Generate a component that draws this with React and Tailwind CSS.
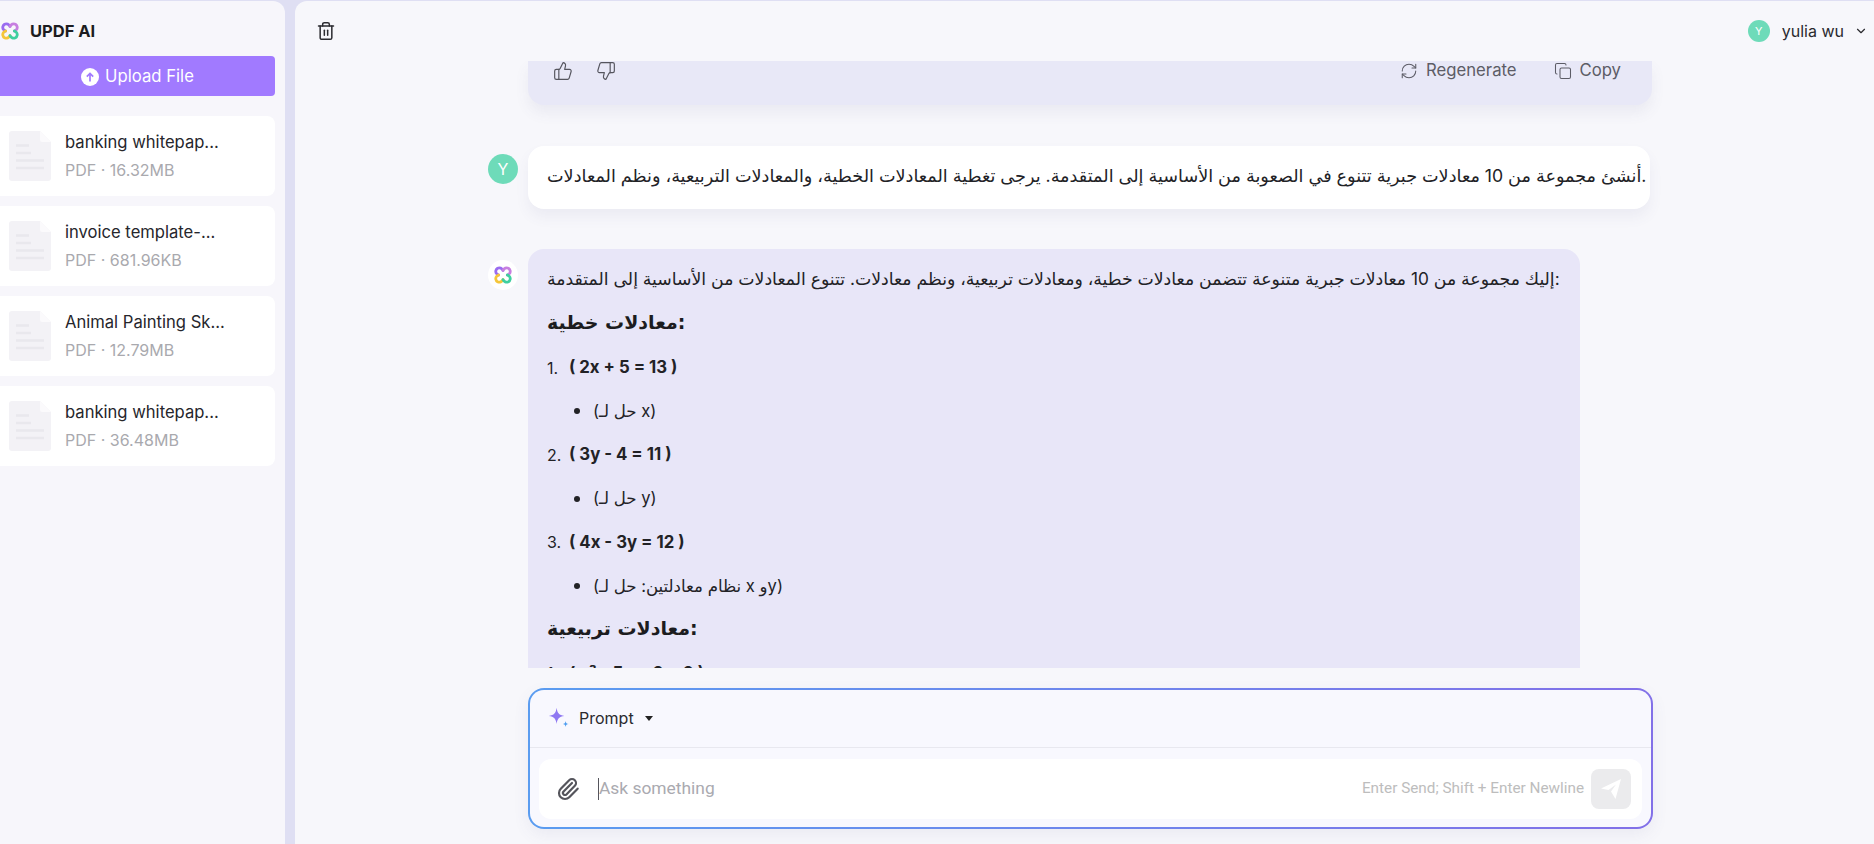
import React from 'react';
import { ChevronDown, Copy, RefreshCw, ThumbsDown, ThumbsUp, Trash2, Paperclip } from 'lucide-react';

const files = [
  { name: 'banking whitepap...', meta: 'PDF · 16.32MB' },
  { name: 'invoice template-...', meta: 'PDF · 681.96KB' },
  { name: 'Animal Painting Sk...', meta: 'PDF · 12.79MB' },
  { name: 'banking whitepap...', meta: 'PDF · 36.48MB' },
];

const Logo = ({ className }) => (
  <svg viewBox="0 0 18 18" fill="none" strokeWidth="2.8" strokeLinecap="round" className={className}>
    <path d="M9 4.4C8 2.2 5.6 1.2 3.6 2.2 1.6 3.4 1.2 6 2.6 7.6 3.2 8.3 3.8 8.7 4.6 9" stroke="#9a6cf0" />
    <path d="M9 4.4C10 2.2 12.4 1.2 14.4 2.2 16.4 3.4 16.8 6 15.4 7.6 14.8 8.3 14.2 8.7 13.4 9" stroke="#c77fe0" />
    <path d="M4.6 9C3.8 9.3 3.2 9.7 2.6 10.4 1.2 12 1.6 14.6 3.6 15.8 5.6 16.8 8 15.8 9 13.6" stroke="#f5c63a" />
    <path d="M13.4 9C14.2 9.3 14.8 9.7 15.4 10.4 16.8 12 16.4 14.6 14.4 15.8 12.4 16.8 10 15.8 9 13.6" stroke="#3fcf9f" />
  </svg>
);

const FileIcon = () => (
  <svg viewBox="0 0 42 50" className="w-[42px] h-[50px] shrink-0">
    <path d="M3 0H31L42 11V47a3 3 0 0 1-3 3H3a3 3 0 0 1-3-3V3a3 3 0 0 1 3-3Z" fill="#f3f2f6" />
    <path d="M31 0L42 11H33a2 2 0 0 1-2-2Z" fill="#fbfafc" />
    <path d="M7 14.5H20M7 22H22M7 29.5H35M7 37H35" stroke="#e9e8ed" strokeWidth="2.4" />
  </svg>
);

const FileCard = ({ name, meta }) => (
  <div className="h-20 w-[275px] rounded-r-lg bg-white flex items-center pl-[9px] gap-[14px]">
    <FileIcon />
    <div className="flex flex-col gap-[8px] -mt-[1px]">
      <span className="text-[16.6px] leading-5 text-[#26262c]">{name}</span>
      <span className="text-[16px] leading-5 text-[#a9a9ae]">{meta}</span>
    </div>
  </div>
);

const Eq = ({ n, children }) => (
  <div className="flex h-[22px] items-center text-[16px] text-[#222226] mt-[21.7px]">
    <span className="w-[22px]">{n}.</span>
    <b className="font-bold text-[16.8px] whitespace-nowrap">{children}</b>
  </div>
);

const Note = ({ children }) => (
  <div className="flex h-[22px] items-center text-[16.6px] text-[#222226] mt-[21.7px] pl-[27px] font-['Inter','DejaVu_Sans',sans-serif]">
    <span className="w-[6px] h-[6px] rounded-full bg-[#222226] mr-[13px]" />
    <span>{children}</span>
  </div>
);

export default function App() {
  return (
    <div className="flex h-[844px] w-[1874px] overflow-hidden bg-[#dfdff3] pt-px font-['Inter',sans-serif]">
      {/* Sidebar */}
      <aside className="w-[285px] shrink-0 bg-[#f7f6fb] rounded-tr-xl flex flex-col">
        <div className="h-[55px] flex items-center pl-[1px] pt-[5px] gap-[11px]">
          <Logo className="w-[18px] h-[18px]" />
          <span className="text-[16.5px] font-bold text-[#1c1c20]">UPDF AI</span>
        </div>
        <button className="h-10 w-[275px] rounded-r bg-[#a17aff] text-white flex items-center justify-center gap-[6px] pt-[1px] text-[16.7px]">
          <svg viewBox="0 0 18 18" className="w-[18px] h-[18px]">
            <circle cx="9" cy="9" r="9" fill="#fff" />
            <path d="M9 13.5V5.5M5.8 8.6L9 5.4l3.2 3.2" fill="none" stroke="#a17aff" strokeWidth="1.7" />
          </svg>
          Upload File
        </button>
        <div className="mt-5 flex flex-col gap-[10px]">
          {files.map((f, i) => (
            <FileCard key={i} {...f} />
          ))}
        </div>
      </aside>

      {/* Main */}
      <main className="ml-[10px] flex-1 bg-[#f7f7fb] rounded-tl-xl flex flex-col">
        <header className="h-[60px] shrink-0 flex items-center justify-between pl-[21px] pr-[6px]">
          <Trash2 className="w-[20px] h-[20px] text-[#2b2b30]" strokeWidth={1.8} />
          <div className="flex items-center">
            <span className="w-[22px] h-[22px] rounded-full bg-[#6edbb9] text-white text-[11px] flex items-center justify-center">Y</span>
            <span className="ml-[12px] text-base text-[#2a2a2e]">yulia wu</span>
            <ChevronDown className="ml-[10px] w-[14px] h-[14px] text-[#2a2a2e]" />
          </div>
        </header>

        {/* Conversation */}
        <div className="h-[607px] shrink-0 overflow-hidden pl-[193px] flex flex-col">
          <div className="ml-10 w-[1124px] h-11 shrink-0 rounded-b-2xl bg-[#e8e8f7] shadow-[0_8px_14px_rgba(90,90,140,0.08)] flex items-start justify-between pl-[25px] pr-[31px]">
            <div className="flex gap-[23px] text-[#55555e]">
              <ThumbsUp className="w-[20px] h-[20px]" strokeWidth={1.4} />
              <ThumbsDown className="w-[20px] h-[20px]" strokeWidth={1.4} />
            </div>
            <div className="flex gap-[37px] text-[16.7px] text-[#5c5c66] -mt-[3px]">
              <span className="flex items-center gap-[8px]">
                <RefreshCw className="w-[18px] h-[18px]" strokeWidth={1.4} />
                Regenerate
              </span>
              <span className="flex items-center gap-[8px]">
                <Copy className="w-[18px] h-[18px]" strokeWidth={1.4} />
                Copy
              </span>
            </div>
          </div>

          <div className="mt-[41px] flex gap-[10px] shrink-0">
            <span className="mt-[8px] w-[30px] h-[30px] rounded-full bg-[#6edbb9] text-white text-base flex items-center justify-center">Y</span>
            <div className="w-[1122px] h-[63px] rounded-2xl bg-white shadow-[0_8px_14px_rgba(90,90,140,0.07)] pl-[19px] pb-[2px] flex items-center whitespace-nowrap overflow-hidden text-[17.65px] text-[#222226] font-['Inter','DejaVu_Sans',sans-serif]">
              أنشئ مجموعة من 10 معادلات جبرية تتنوع في الصعوبة من الأساسية إلى المتقدمة. يرجى تغطية المعادلات الخطية، والمعادلات التربيعية، ونظم المعادلات.
            </div>
          </div>

          <div className="mt-10 flex gap-[10px]">
            <span className="mt-[11px] w-[30px] h-[30px] rounded-full bg-white flex items-center justify-center">
              <Logo className="w-[18px] h-[18px]" />
            </span>
            <div className="w-[1052px] h-[500px] shrink-0 rounded-2xl bg-[#e8e6f8] pl-[19px] pt-[19px]">
              <p className="h-[22px] leading-[22px] whitespace-nowrap text-[17.3px] text-[#222226] font-['Inter','DejaVu_Sans',sans-serif]">
                إليك مجموعة من 10 معادلات جبرية متنوعة تتضمن معادلات خطية، ومعادلات تربيعية، ونظم معادلات. تتنوع المعادلات من الأساسية إلى المتقدمة:
              </p>
              <h3 className="mt-[20px] h-[25px] leading-[25px] text-[19px] font-bold text-[#1c1c20] font-['DejaVu_Sans',sans-serif]">معادلات خطية:</h3>
              <Eq n="1">( 2x + 5 = 13 )</Eq>
              <Note>(حل لـ x)</Note>
              <Eq n="2">( 3y - 4 = 11 )</Eq>
              <Note>(حل لـ y)</Note>
              <Eq n="3">( 4x - 3y = 12 )</Eq>
              <Note>(نظام معادلتين: حل لـ x وy)</Note>
              <h3 className="mt-[18.5px] h-[25px] leading-[25px] text-[19px] font-bold text-[#1c1c20] font-['DejaVu_Sans',sans-serif]">معادلات تربيعية:</h3>
              <Eq n="1">( x² - 5x + 6 = 0 )</Eq>
            </div>
          </div>
        </div>

        {/* Composer */}
        <div className="mt-5 ml-[233px] w-[1125px] h-[141px] shrink-0 rounded-2xl p-[2px] bg-[linear-gradient(90deg,#5a9cf0,#8270e8)] shadow-[0_6px_16px_rgba(90,90,140,0.08)]">
          <div className="h-full rounded-[14px] bg-[#f8f8fe] flex flex-col overflow-hidden">
            <div className="h-[58px] shrink-0 border-b border-[#e8e8ef] flex items-center pl-[17px] pb-[1px] text-base text-[#2a2a2e]">
              <svg viewBox="0 0 20 20" className="w-[24px] h-[24px]">
                <path d="M8 1.5C8.6 6 10 7.6 14.5 8.3 10 9 8.6 10.6 8 15 7.4 10.6 6 9 1.5 8.3 6 7.6 7.4 6 8 1.5Z" fill="#8f78f2" />
                <path d="M15.5 12.5C15.7 14.2 16.3 14.8 18 15 16.3 15.2 15.7 15.8 15.5 17.5 15.3 15.8 14.7 15.2 13 15 14.7 14.8 15.3 14.2 15.5 12.5Z" fill="#4b9cf0" />
              </svg>
              <span className="ml-[8px]">Prompt</span>
              <span className="ml-[11px] w-0 h-0 border-x-[4px] border-x-transparent border-t-[5px] border-t-[#222]" />
            </div>
            <div className="mx-[9px] mt-[11px] h-[60px] rounded-xl bg-white flex items-center pl-[17px] pr-[11px]">
              <Paperclip className="w-[24px] h-[24px] text-[#55555c]" strokeWidth={2.2} />
              <span className="ml-[18px] -mt-[1px] w-px h-[22px] bg-[#55555c]" />
              <span className="flex-1 -mt-[2px] text-[17.4px] text-[#aaaab0] font-['Roboto',sans-serif]">Ask something</span>
              <span className="-mt-[1px] text-[15.3px] text-[#bdbdbd] font-['Roboto',sans-serif]">Enter Send; Shift + Enter Newline</span>
              <span className="ml-[7px] w-10 h-10 rounded-lg bg-[#ebebed] flex items-center justify-center">
                <svg viewBox="0 0 22 22" className="w-[22px] h-[22px]">
                  <path d="M1 10.5L21 1 15.5 21 11 13.5 16 6.5 8.5 12Z" fill="#fff" />
                </svg>
              </span>
            </div>
          </div>
        </div>
      </main>
    </div>
  );
}
